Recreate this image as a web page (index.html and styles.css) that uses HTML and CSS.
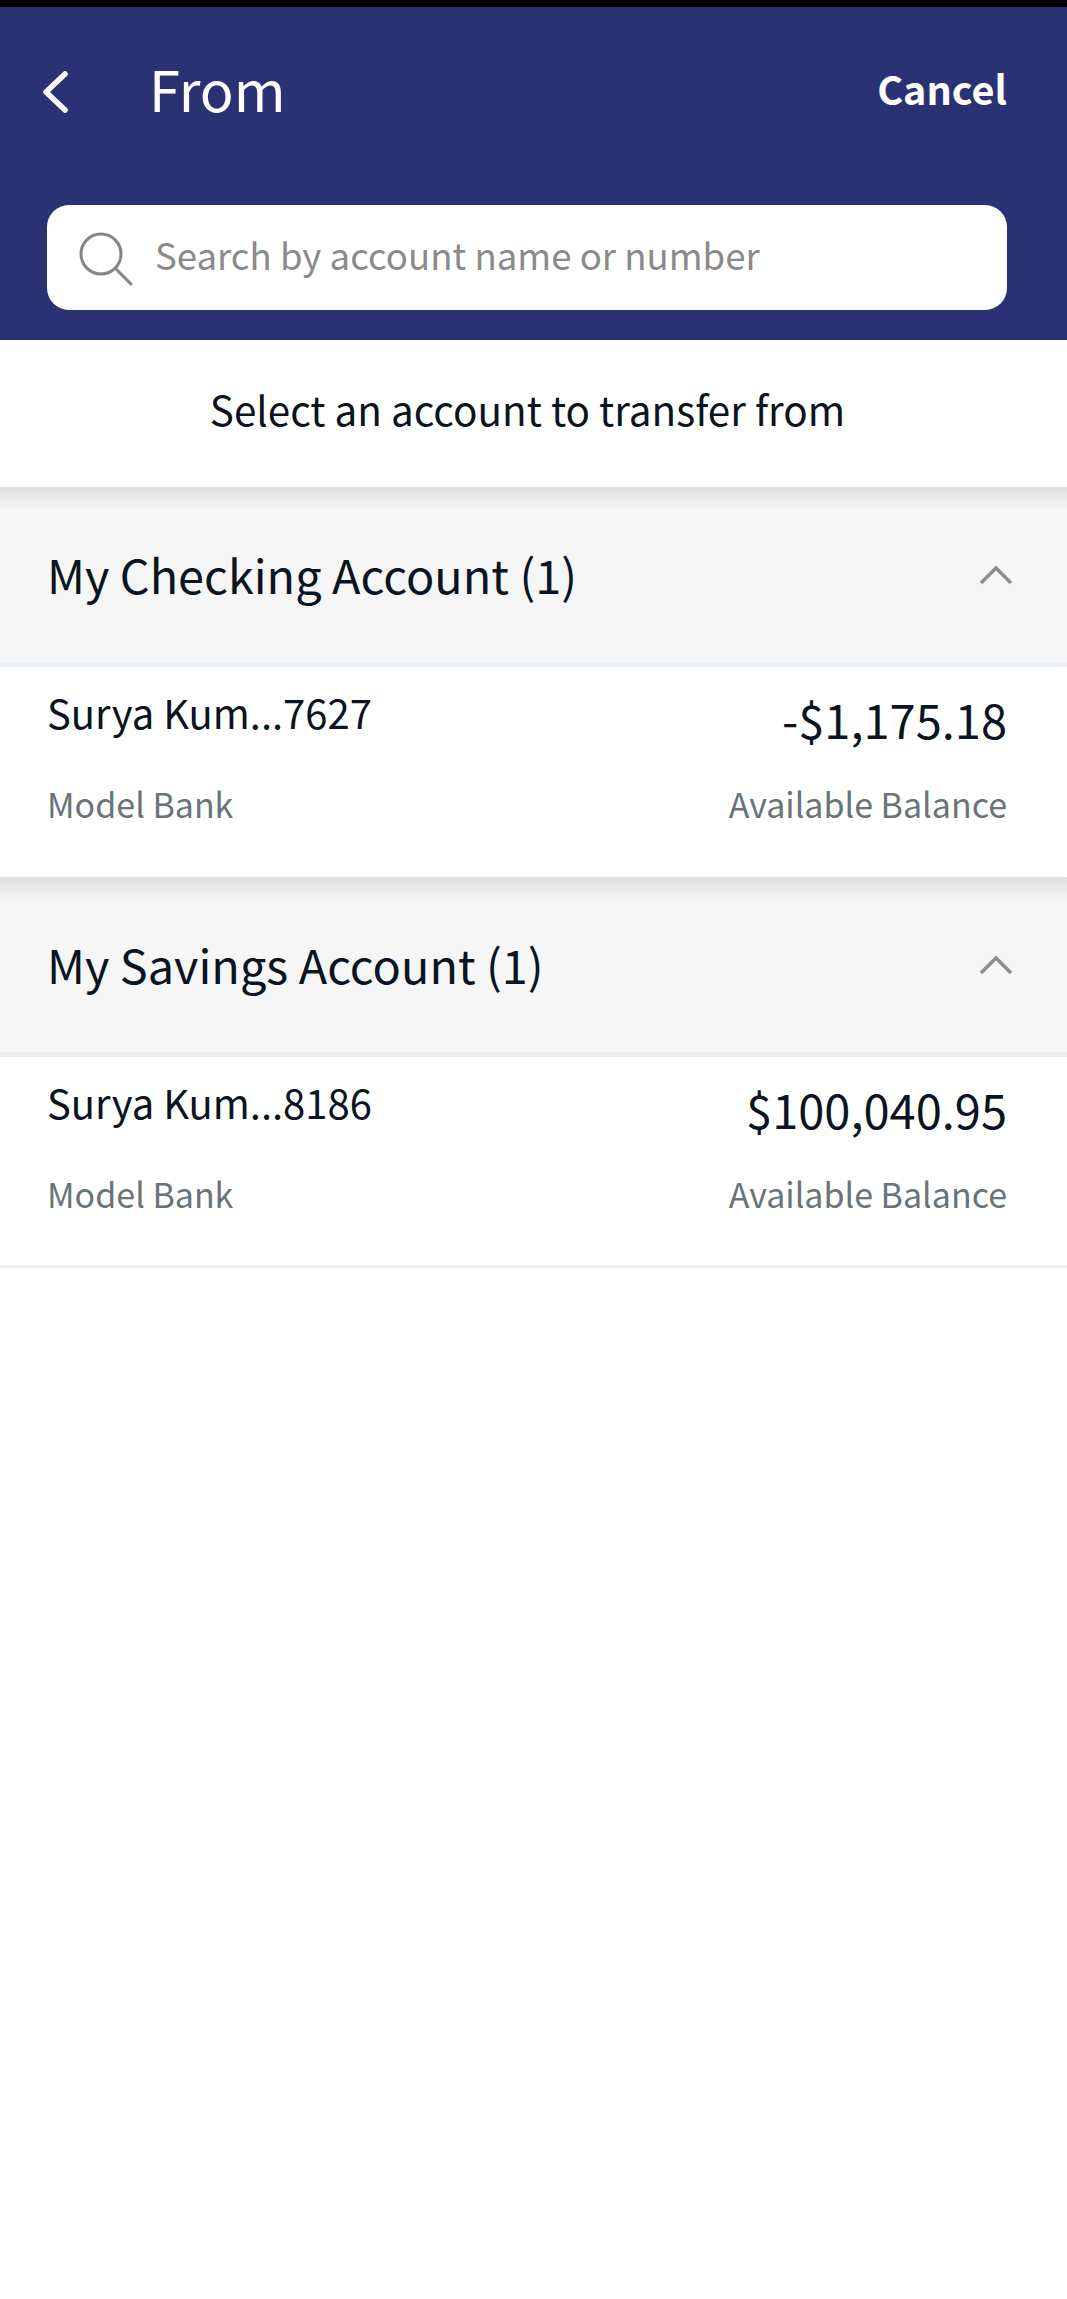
FILE: index.html
```html
<!DOCTYPE html>
<html lang="en">
<head>
<meta charset="utf-8">
<title>From</title>
<link rel="stylesheet" href="styles.css">
</head>
<body>
<div class="status"></div>
<header class="top">
  <div class="nav">
    <svg class="back" viewBox="0 0 28 44" width="28" height="44"><path d="M24 4 5 22l19 18" fill="none" stroke="#fff" stroke-width="5.5" stroke-linecap="round" stroke-linejoin="round"/></svg>
    <h1 class="title">From</h1>
    <span class="cancel">Cancel</span>
  </div>
  <div class="search">
    <svg class="glass" viewBox="0 0 54 56" width="54" height="56"><circle cx="22" cy="24" r="20" fill="none" stroke="#858585" stroke-width="3"/><path d="m37 39 15 15" fill="none" stroke="#858585" stroke-width="3" stroke-linecap="round"/></svg>
    <span class="placeholder">Search by account name or number</span>
  </div>
</header>
<div class="prompt">Select an account to transfer from</div>
<section class="group">
  <div class="group-head">
    <h2 class="group-title">My Checking Account (1)</h2>
    <svg class="chev" viewBox="0 0 34 22" width="34" height="22"><path d="M2 19 17 4l15 15" fill="none" stroke="#8a8e91" stroke-width="3.5"/></svg>
  </div>
  <div class="item">
    <span class="name">Surya Kum...7627</span>
    <span class="amount">-$1,175.18</span>
    <span class="sub">Model Bank</span>
    <span class="sub right">Available Balance</span>
  </div>
</section>
<section class="group">
  <div class="group-head">
    <h2 class="group-title">My Savings Account (1)</h2>
    <svg class="chev" viewBox="0 0 34 22" width="34" height="22"><path d="M2 19 17 4l15 15" fill="none" stroke="#8a8e91" stroke-width="3.5"/></svg>
  </div>
  <div class="item last">
    <span class="name">Surya Kum...8186</span>
    <span class="amount">$100,040.95</span>
    <span class="sub">Model Bank</span>
    <span class="sub right">Available Balance</span>
  </div>
</section>
</body>
</html>
```
FILE: styles.css
```css
* { box-sizing: border-box; }
html, body { margin: 0; padding: 0; background: #fff; }
body { font-family: "Noto Sans CJK SC", "Liberation Sans", sans-serif; color: #0b1420; height: 2299px; overflow: hidden; }
h1, h2 { margin: 0; font-weight: 400; }
.status { height: 7px; background: #000; }
.top { height: 333px; background: #2b3274; padding: 0 60px 30px 47px; display: flex; flex-direction: column; justify-content: space-between; }
.nav { display: flex; align-items: center; height: 170px; }
.back { margin-left: -6px; flex: none; }
.title { margin-left: 80px; margin-bottom: 8px; font-size: 56px; line-height: 70px; color: #fff; flex: 1; }
.cancel { font-size: 39.6px; line-height: 56px; color: #fff; font-weight: 600; margin-bottom: 8px; }
.search { height: 105px; width: 960px; background: #fff; border-radius: 22px; display: flex; align-items: center; padding-left: 32px; }
.glass { flex: none; }
.placeholder { margin-left: 22px; margin-bottom: 6px; font-size: 36.6px; line-height: 56px; color: #8a8a8a; }
.prompt { height: 147px; display: flex; align-items: center; justify-content: center; font-size: 40.4px; padding: 0 12px 10px 0; color: #0b1420; }
.group-head { height: 180px; padding: 0 54px 0 47px; display: flex; align-items: center; justify-content: space-between; background: linear-gradient(#dfdfdf, #f6f6f7 24px); border-bottom: 5px solid #e9eef3; }
.group-title { font-size: 46.8px; line-height: 66px; margin-bottom: 2px; }
.item { height: 210px; padding: 15px 60px 0 47px; display: grid; grid-template-columns: 1fr auto; grid-template-rows: 97px 50px; background: #fff; }
.item.last { height: 211px; border-bottom: 3px solid #edeff1; }
.right { justify-self: end; }
.name { font-size: 40px; line-height: 60px; }
.amount { font-size: 47px; line-height: 60px; margin-top: 7px; justify-self: end; }
.sub { font-size: 34px; line-height: 50px; color: #68737a; }
```
